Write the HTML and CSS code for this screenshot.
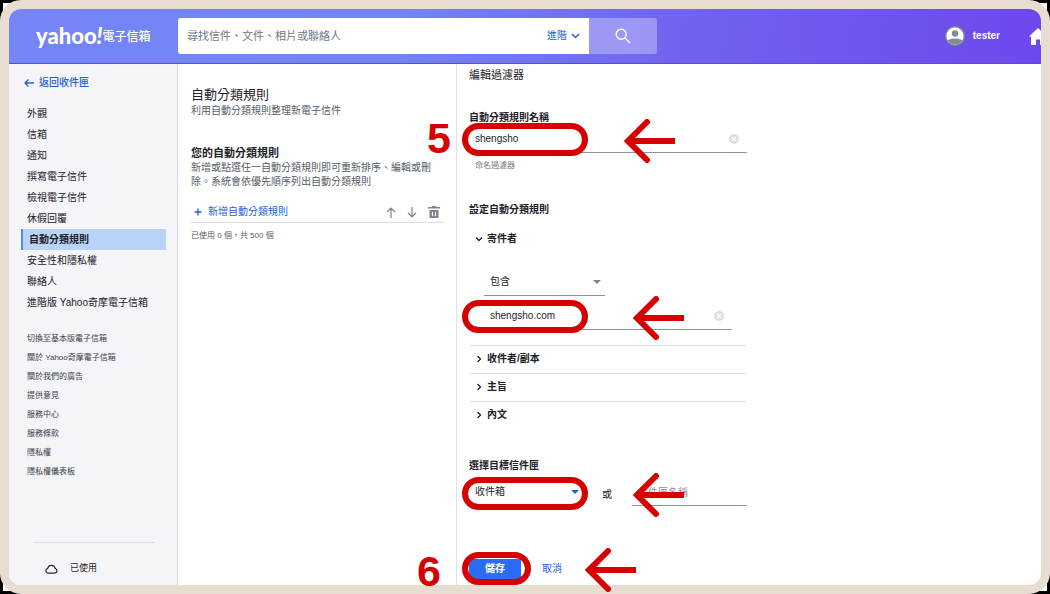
FILE: index.html
```html
<!DOCTYPE html>
<html lang="zh-Hant">
<head>
    <meta charset="UTF-8">
    <meta name="viewport" content="width=device-width, initial-scale=1.0">
    <title>自動分類規則</title>
    <link rel="stylesheet" href="styles.css">
</head>
<body>
    <!-- Shapes used by the step markers and the clear buttons -->
    <svg class="symbols" aria-hidden="true">
        <symbol id="arrow" viewBox="0 0 51 44">
            <path d="M23 3L4 22L23 41" fill="none" stroke="#d60000" stroke-width="6" stroke-linecap="round"/>
            <path d="M5 22H51" fill="none" stroke="#d60000" stroke-width="6"/>
        </symbol>
        <symbol id="clear" viewBox="0 0 10 10">
            <circle cx="5" cy="5" r="5" fill="#dcdee4"/>
            <path d="M3 3l4 4M7 3l-4 4" stroke="#fff" stroke-width="1.2"/>
        </symbol>
    </svg>

    <div class="frame">
        <header class="header">
            <a class="logo" href="#"><span class="logo-word">yahoo<i>!</i></span><span class="logo-mail">電子信箱</span></a>
            <form class="search">
                <div class="search-box">
                    <input type="text" class="search-input" aria-label="搜尋" placeholder="尋找信件、文件、相片或聯絡人">
                    <button type="button" class="advanced">進階
                        <svg width="9" height="6" viewBox="0 0 9 6"><path d="M1 1l3.500 3.500L8 1" fill="none" stroke="#1b62d8" stroke-width="1.500"/></svg>
                    </button>
                </div>
                <button type="submit" class="search-btn" aria-label="搜尋">
                    <svg width="16" height="16" viewBox="0 0 16 16" fill="none" stroke="#fff" stroke-width="1.400"><circle cx="6.200" cy="6.200" r="5"/><path d="M10 10l5 5"/></svg>
                </button>
            </form>
            <a class="account" href="#">
                <svg width="20" height="20" viewBox="0 0 20 20">
                    <clipPath id="face"><circle cx="10" cy="10" r="8.500"/></clipPath>
                    <circle cx="10" cy="10" r="10" fill="#828a93"/>
                    <circle cx="10" cy="10" r="8.500" fill="#fff"/>
                    <g clip-path="url(#face)" fill="#828a93"><circle cx="10" cy="7.500" r="3.200"/><ellipse cx="10" cy="17" rx="9" ry="4.500"/></g>
                </svg>
                <span>tester</span>
            </a>
            <a class="home" href="#" aria-label="首頁">
                <svg width="18" height="17" viewBox="0 0 18 17"><path d="M9 0L0 8.500h2V17h5v-5.500h4V17h5V8.500h2z" fill="#fff"/></svg>
            </a>
        </header>

        <div class="columns">
            <aside class="sidebar">
                <a class="back" href="#">
                    <svg width="10" height="8" viewBox="0 0 10 8" fill="none" stroke="#1b62d8" stroke-width="1.300"><path d="M4.500 .5L1 4l3.500 3.500M1 4h9"/></svg>
                    返回收件匣
                </a>
                <nav class="nav">
                    <a href="#">外觀</a>
                    <a href="#">信箱</a>
                    <a href="#">通知</a>
                    <a href="#">撰寫電子信件</a>
                    <a href="#">檢視電子信件</a>
                    <a href="#">休假回覆</a>
                    <a href="#" class="active">自動分類規則</a>
                    <a href="#">安全性和隱私權</a>
                    <a href="#">聯絡人</a>
                    <a href="#">進階版 Yahoo奇摩電子信箱</a>
                </nav>
                <nav class="subnav">
                    <a href="#">切換至基本版電子信箱</a>
                    <a href="#">關於 Yahoo奇摩電子信箱</a>
                    <a href="#">關於我們的廣告</a>
                    <a href="#">提供意見</a>
                    <a href="#">服務中心</a>
                    <a href="#">服務條款</a>
                    <a href="#">隱私權</a>
                    <a href="#">隱私權儀表板</a>
                </nav>
                <div class="storage">
                    <svg width="13" height="11" viewBox="0 0 13 11"><path d="M3.200 10.200a2.500 2.500 0 0 1-.5-4.900a3.800 3.800 0 0 1 7.400 0a2.500 2.500 0 0 1-.4 4.900z" fill="none" stroke="#22262c" stroke-width="1.200" stroke-linejoin="round"/></svg>
                    已使用
                </div>
            </aside>

            <section class="rules">
                <h1>自動分類規則</h1>
                <p>利用自動分類規則整理新電子信件</p>
                <h2>您的自動分類規則</h2>
                <p>新增或點選任一自動分類規則即可重新排序、編輯或刪除。系統會依優先順序列出自動分類規則</p>
                <div class="toolbar">
                    <button type="button" class="add">
                        <svg width="8" height="8" viewBox="0 0 8 8"><path d="M4 .5v7M.5 4h7" stroke="#1b62d8" stroke-width="1.300"/></svg>
                        新增自動分類規則
                    </button>
                    <button type="button" aria-label="上移"><svg width="10" height="11" viewBox="0 0 10 11" fill="none" stroke="#7d8490" stroke-width="1.200"><path d="M5 11V1M1 5l4-4l4 4"/></svg></button>
                    <button type="button" aria-label="下移"><svg width="10" height="11" viewBox="0 0 10 11" fill="none" stroke="#7d8490" stroke-width="1.200"><path d="M5 0v10M1 6l4 4l4-4"/></svg></button>
                    <button type="button" aria-label="刪除"><svg width="12" height="12" viewBox="0 0 12 12"><path d="M0 1h4V0h4v1h4v1.500H0zM1.500 4h9v8h-9z" fill="#7d8490"/><path d="M4.500 6v4M7.500 6v4" stroke="#fff" stroke-width="1.200"/></svg></button>
                </div>
                <p class="usage">已使用 0 個，共 500 個</p>
            </section>

            <main class="editor">
                <h2>編輯過濾器</h2>

                <label class="title" for="ruleName">自動分類規則名稱</label>
                <div class="field marked">
                    <input type="text" id="ruleName" value="shengsho">
                    <button type="button" class="clear" aria-label="清除"><svg width="10" height="10"><use href="#clear"/></svg></button>
                    <span class="step">5</span>
                    <span class="ring"></span>
                    <svg class="arrow"><use href="#arrow"/></svg>
                </div>
                <p class="hint">命名過濾器</p>

                <h3 class="title">設定自動分類規則</h3>
                <details class="sender" open>
                    <summary><svg width="8" height="8" viewBox="0 0 8 8"><path d="M1 2.500l3 3l3-3" fill="none" stroke="#1d2228" stroke-width="1.300"/></svg>寄件者</summary>
                    <div class="conditions">
                        <div class="select">
                            <select aria-label="條件"><option>包含</option><option>不包含</option></select>
                        </div>
                        <div class="field marked">
                            <input type="text" aria-label="寄件者" value="shengsho.com">
                            <button type="button" class="clear" aria-label="清除"><svg width="10" height="10"><use href="#clear"/></svg></button>
                            <span class="ring"></span>
                            <svg class="arrow"><use href="#arrow"/></svg>
                        </div>
                    </div>
                </details>
                <details><summary><svg width="8" height="8" viewBox="0 0 8 8"><path d="M2.500 1l3 3l-3 3" fill="none" stroke="#1d2228" stroke-width="1.300"/></svg>收件者/副本</summary></details>
                <details><summary><svg width="8" height="8" viewBox="0 0 8 8"><path d="M2.500 1l3 3l-3 3" fill="none" stroke="#1d2228" stroke-width="1.300"/></svg>主旨</summary></details>
                <details><summary><svg width="8" height="8" viewBox="0 0 8 8"><path d="M2.500 1l3 3l-3 3" fill="none" stroke="#1d2228" stroke-width="1.300"/></svg>內文</summary></details>

                <label class="title" for="folder">選擇目標信件匣</label>
                <div class="folder marked">
                    <div class="select blue">
                        <select id="folder"><option>收件箱</option></select>
                    </div>
                    <span class="or">或</span>
                    <input type="text" aria-label="信件匣名稱" placeholder="信件匣名稱">
                    <span class="ring"></span>
                    <svg class="arrow"><use href="#arrow"/></svg>
                </div>

                <div class="actions marked">
                    <button type="submit" class="save">儲存</button>
                    <button type="button" class="cancel">取消</button>
                    <span class="step">6</span>
                    <span class="ring"></span>
                    <svg class="arrow"><use href="#arrow"/></svg>
                </div>
            </main>
        </div>
    </div>
</body>
</html>
```
FILE: styles.css
```css
* {
    box-sizing: border-box;
}
body {
    margin: 0;
    background: #000 linear-gradient(#fff, #fff) center / calc(100% - 6px) calc(100% - 6px) no-repeat;
    font-family: "Liberation Sans", "Noto Sans CJK TC", sans-serif;
    font-size: 10px;
    line-height: 14px;
    color: #1d2228;
}
h1, h2, h3, p {
    margin: 0;
}
a {
    color: inherit;
    text-decoration: none;
}
button, input, select {
    font: inherit;
    color: inherit;
    margin: 0;
    padding: 0;
    border: none;
    border-radius: 0;
    background: none;
    outline: none;
}
button {
    cursor: pointer;
}
svg {
    display: block;
    flex: none;
}
.symbols {
    position: absolute;
    width: 0;
    height: 0;
}
.frame {
    display: flex;
    flex-direction: column;
    min-height: 100vh;
    border: 9px solid #e8ddd0;
    border-radius: 21px;
    background-color: #fff;
}

/* Header */
.header {
    display: flex;
    align-items: center;
    height: 55px;
    padding-left: 27px;
    overflow: hidden;
    border-bottom: 1px solid #5b4fd0;
    border-radius: 12px 12px 0 0;
    background: linear-gradient(100deg, #7585f5 0%, #7384f4 38%, #7064f0 65%, #6e47ec 100%);
    color: #fff;
}
.logo {
    display: flex;
    align-items: center;
    width: 142px;
    flex: none;
}
.logo-word {
    font-family: Lato, sans-serif;
    font-size: 22px;
    font-weight: 900;
    line-height: 28px;
}
.logo-mail {
    padding-top: 1px;
    font-size: 12px;
    font-weight: 500;
    line-height: 18px;
}
.search {
    display: flex;
    flex: 0 1 479px;
    height: 36px;
}
.search-box {
    display: flex;
    flex: 1;
    padding: 0 9px;
    border-radius: 3px 0 0 3px;
    background-color: #fff;
}
.search-input {
    flex: 1;
    min-width: 0;
    font-size: 11px;
}
.search-input::placeholder {
    color: #6e7780;
    opacity: 1;
}
.advanced {
    display: flex;
    align-items: center;
    gap: 4px;
    color: #1b62d8;
}
.search-btn {
    display: flex;
    align-items: center;
    justify-content: center;
    width: 68px;
    border-radius: 0 3px 3px 0;
    background-color: rgba(255, 255, 255, 0.3);
}
.account {
    display: flex;
    align-items: center;
    gap: 8px;
    margin-left: auto;
    font-weight: 600;
}
.home {
    width: 12px;
    margin-left: 29px;
    flex: none;
}

/* Columns */
.columns {
    display: flex;
    flex: 1;
}
.sidebar {
    display: flex;
    flex-direction: column;
    width: 169px;
    flex: none;
    padding: 10px 11px 0 12px;
    border-right: 1px solid #d9dae2;
    border-bottom-left-radius: 12px;
    background-color: #f4f4f9;
}
.back {
    display: flex;
    align-items: center;
    gap: 5px;
    margin-bottom: 11px;
    padding-left: 3px;
    line-height: 18px;
    font-weight: 500;
    color: #1b62d8;
}
.nav a {
    display: block;
    padding-left: 6px;
    line-height: 21px;
    white-space: nowrap;
}
.nav .active {
    border-left: 2px solid #4a90ea;
    background-color: #b9d4f8;
    font-weight: 700;
}
.subnav {
    margin-top: 16px;
    font-size: 8px;
    color: #3a4048;
}
.subnav a {
    display: block;
    padding-left: 6px;
    line-height: 19px;
}
.storage {
    display: flex;
    align-items: center;
    gap: 12px;
    margin: auto 11px 0 12px;
    padding: 16px 12px 8px;
    border-top: 1px solid #dcdde4;
    font-size: 9px;
    line-height: 18px;
}

.rules {
    width: 279px;
    flex: none;
    padding: 22px 12px 0 13px;
    border-right: 1px solid #e0e2e8;
}
.rules h1 {
    font-size: 13px;
    font-weight: 400;
    line-height: 18px;
}
.rules h2 {
    margin-top: 27px;
    font-size: 11px;
    line-height: 16px;
}
.rules p {
    padding-right: 12px;
    color: #555c66;
}
.toolbar {
    display: flex;
    align-items: center;
    gap: 11px;
    height: 21px;
    margin-top: 13px;
    padding-right: 4px;
    border-bottom: 1px solid #dcdee4;
}
.add {
    display: flex;
    align-items: center;
    gap: 6px;
    margin-right: auto;
    padding-left: 3px;
    color: #1b62d8;
}
.rules .usage {
    margin-top: 6px;
    font-size: 8px;
}

/* Editor */
.editor {
    width: 290px;
    padding: 2px 0 6px 12px;
}
.editor h2 {
    font-size: 11px;
    font-weight: 400;
    line-height: 18px;
}
.title {
    display: block;
    margin-top: 29px;
    font-size: 10px;
    font-weight: 700;
    line-height: 16px;
}
.editor h2 + .title {
    margin-top: 26px;
}
.field {
    display: flex;
    align-items: center;
    height: 27px;
    padding: 0 8px 0 6px;
    border-bottom: 1px solid #8f939e;
}
.field input {
    flex: 1;
    min-width: 0;
}
.hint {
    margin-top: 6px;
    padding-left: 6px;
    font-size: 8px;
    color: #6e7780;
}
details {
    border-top: 1px solid #e0e2e6;
}
summary {
    display: flex;
    align-items: center;
    gap: 4px;
    height: 27px;
    padding: 0 0 1px 6px;
    list-style: none;
    font-weight: 600;
    cursor: pointer;
}
.sender {
    margin-top: 8px;
    border-top: none;
}
.conditions {
    padding: 16px 15px 15px;
}
.conditions .select {
    width: 121px;
}
.conditions .field {
    margin-top: 7px;
}
.select {
    position: relative;
    border-bottom: 1px solid #8f939e;
}
.select::after {
    content: "";
    position: absolute;
    top: 11px;
    right: 4px;
    border: 4px solid transparent;
    border-top-color: #7d8490;
    border-bottom: none;
    pointer-events: none;
}
.select.blue::after {
    border-top-color: #1b62d8;
}
.select select {
    width: 100%;
    height: 26px;
    padding-left: 6px;
    appearance: none;
}
.folder {
    display: flex;
    align-items: center;
    height: 27px;
    margin-top: 5px;
}
.folder .select {
    width: 114px;
}
.or {
    margin: 0 20px 0 19px;
    padding-top: 4px;
}
.folder input {
    flex: 1;
    min-width: 0;
    height: 27px;
    padding-left: 6px;
    border-bottom: 1px solid #8f939e;
}
.folder input::placeholder {
    color: #8a919a;
    opacity: 1;
}
.actions {
    display: flex;
    gap: 21px;
    height: 20px;
    margin-top: 53px;
}
.save {
    width: 52px;
    border-radius: 2px;
    background-color: #2a6cf6;
    color: #fff;
    font-weight: 600;
}
.cancel {
    color: #1b62d8;
}

/* Step markers drawn over the form */
.marked {
    position: relative;
}
.ring, .arrow, .step {
    position: absolute;
    pointer-events: none;
}
.ring {
    top: -3px;
    left: -7px;
    width: 126px;
    height: 33px;
    border: 6px solid #d60000;
    border-radius: 17px;
}
.arrow {
    top: -7px;
    left: 155px;
    width: 51px;
    height: 44px;
}
.step {
    top: -9px;
    left: -42px;
    font-family: "Liberation Sans", sans-serif;
    font-size: 43px;
    font-weight: 700;
    line-height: 43px;
    color: #d60000;
}
.conditions .ring {
    left: -22px;
}
.conditions .arrow {
    left: 149px;
}
.folder .ring {
    top: -2px;
}
.folder .arrow {
    top: -6px;
    left: 164px;
}
.actions .ring {
    top: -7px;
    width: 69px;
}
.actions .arrow {
    top: -11px;
    left: 116px;
}
.actions .step {
    left: -52px;
}
```
